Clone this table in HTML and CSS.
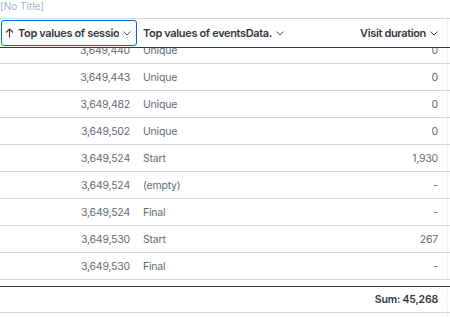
FILE: index.html
```html
<!DOCTYPE html>
<html lang="en">
<head>
    <meta charset="UTF-8">
    <title>Data table</title>
    <link rel="stylesheet" href="styles.css">
</head>
<body>

<div class="panel-title">[No Title]</div>

<div class="datagrid">
    <div class="row head">
        <div class="cell head-cell focused">
            <svg class="sort-icon" width="9" height="10" viewBox="0 0 9 10"><path d="M4.5 9.5V1M1 4.5L4.5 1L8 4.5" fill="none" stroke="#343741" stroke-width="1.1"/></svg>
            <span class="head-label">Top values of sessio</span>
            <svg class="chevron" width="8" height="5" viewBox="0 0 8 5"><path d="M0.5 0.5L4 4L7.5 0.5" fill="none" stroke="#343741" stroke-width="0.9"/></svg>
        </div>
        <div class="cell head-cell">
            <span class="head-label">Top values of eventsData.</span>
            <svg class="chevron" width="8" height="5" viewBox="0 0 8 5"><path d="M0.5 0.5L4 4L7.5 0.5" fill="none" stroke="#343741" stroke-width="0.9"/></svg>
        </div>
        <div class="cell head-cell right">
            <span class="head-label">Visit duration</span>
            <svg class="chevron" width="8" height="5" viewBox="0 0 8 5"><path d="M0.5 0.5L4 4L7.5 0.5" fill="none" stroke="#343741" stroke-width="0.9"/></svg>
        </div>
        <div class="cell edge"></div>
    </div>

    <div class="body-viewport">
        <div class="body-rows">
            <div class="row"><div class="cell right">3,649,440</div><div class="cell">Unique</div><div class="cell right">0</div><div class="cell edge"></div></div>
            <div class="row"><div class="cell right">3,649,443</div><div class="cell">Unique</div><div class="cell right">0</div><div class="cell edge"></div></div>
            <div class="row"><div class="cell right">3,649,482</div><div class="cell">Unique</div><div class="cell right">0</div><div class="cell edge"></div></div>
            <div class="row"><div class="cell right">3,649,502</div><div class="cell">Unique</div><div class="cell right">0</div><div class="cell edge"></div></div>
            <div class="row"><div class="cell right">3,649,524</div><div class="cell">Start</div><div class="cell right">1,930</div><div class="cell edge"></div></div>
            <div class="row"><div class="cell right">3,649,524</div><div class="cell">(empty)</div><div class="cell right">-</div><div class="cell edge"></div></div>
            <div class="row"><div class="cell right">3,649,524</div><div class="cell">Final</div><div class="cell right">-</div><div class="cell edge"></div></div>
            <div class="row"><div class="cell right">3,649,530</div><div class="cell">Start</div><div class="cell right">267</div><div class="cell edge"></div></div>
            <div class="row"><div class="cell right">3,649,530</div><div class="cell">Final</div><div class="cell right">-</div><div class="cell edge"></div></div>
        </div>
    </div>

    <div class="row foot">
        <div class="cell"></div>
        <div class="cell"></div>
        <div class="cell right sum">Sum: 45,268</div>
        <div class="cell edge"></div>
    </div>

    <div class="row">
        <div class="cell right">3,649,544</div><div class="cell">Unique</div><div class="cell right">0</div><div class="cell edge"></div>
    </div>
</div>

</body>
</html>
```

FILE: styles.css
```css
html, body {
    overflow: hidden;
}
body {
    margin: 0;
    font-family: Inter, "Noto Sans", sans-serif;
    background-color: #fff;
    color: #646a77;
}
.panel-title {
    height: 18px;
    font-size: 10px;
    line-height: 12px;
    color: #a2b3cc;
}
.datagrid {
    width: 450px;
    border-top: 1px solid #d3dae6;
}
.row {
    display: grid;
    grid-template-columns: 137px 155px 153px 5px;
    height: 27px;
    box-sizing: border-box;
    border-bottom: 1px solid #d3dae6;
    font-size: 10.5px;
    letter-spacing: -0.2px;
}
.cell {
    display: flex;
    align-items: center;
    padding: 0 7px 0 6px;
    white-space: nowrap;
    overflow: hidden;
}
.cell.right {
    justify-content: flex-end;
}
.cell.edge {
    padding: 0;
    margin-left: 2px;
    border-left: 1px solid #eef1f6;
}
.head {
    height: 29px;
    border-bottom: 1px solid #343741;
    font-size: 11px;
    letter-spacing: -0.35px;
    font-weight: 600;
    color: #343741;
}
.head-cell {
    gap: 4px;
}
.head-cell.focused {
    margin: 1px 0 1px 1px;
    padding-left: 3px;
    padding-right: 3px;
    border: 1.5px solid #0b64dd;
    border-radius: 3px;
}
.head-label {
    overflow: hidden;
}
.chevron {
    flex-shrink: 0;
    margin-top: 1px;
}
.sort-icon {
    flex-shrink: 0;
}
.body-viewport {
    height: 238px;
    overflow: hidden;
}
.body-rows {
    margin-top: -11px;
}
.foot {
    border-top: 1px solid #343741;
}
.sum {
    font-weight: 600;
    color: #343741;
}
```
